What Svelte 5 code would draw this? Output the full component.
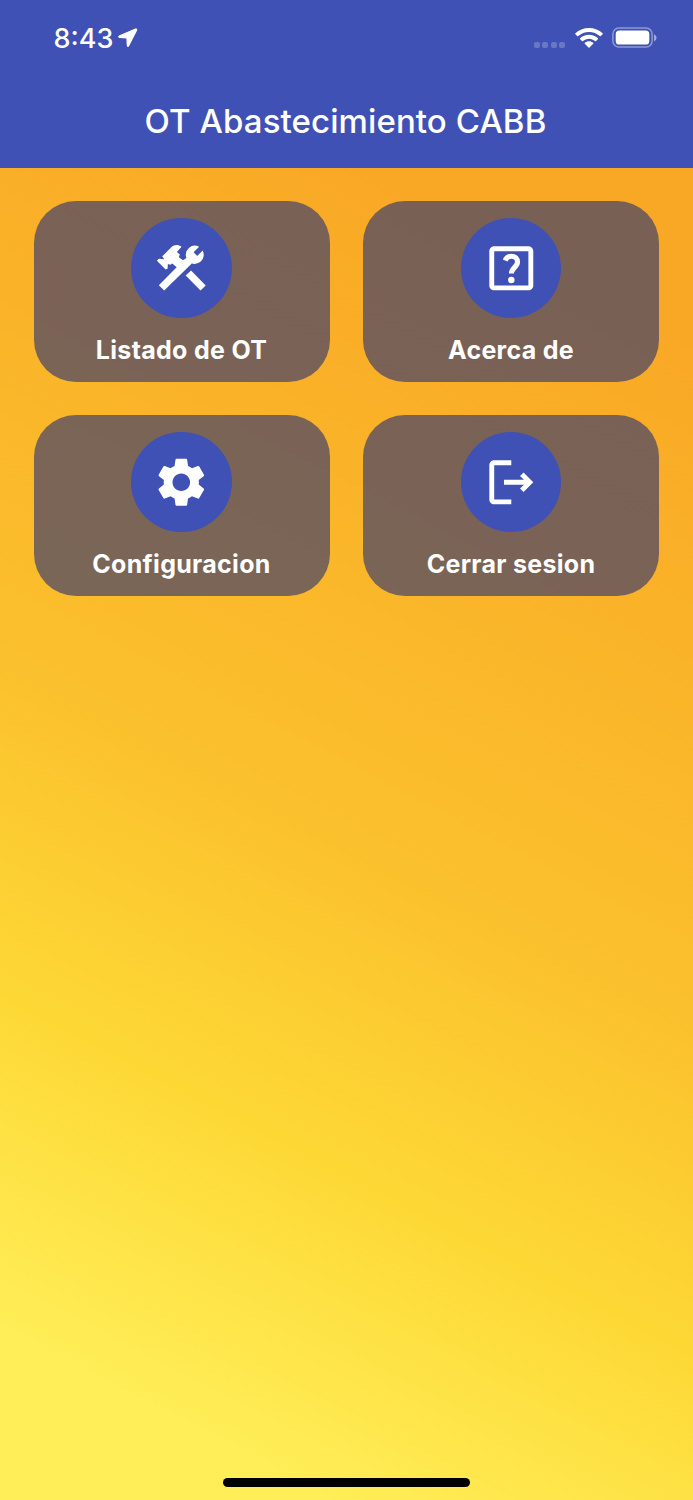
<script>
  const items = [
    { label: 'Listado de OT', icon: 'tools' },
    { label: 'Acerca de', icon: 'help' },
    { label: 'Configuracion', icon: 'settings' },
    { label: 'Cerrar sesion', icon: 'logout' }
  ];
</script>

<div class="screen">
  <header>
    <div class="status">
      <div class="clock">
        <span class="time">8:43</span>
        <svg class="location" viewBox="0 0 20 20" width="20" height="20">
          <path d="M17.6 1.2 1.2 8.2Q.2 9 1.6 9.4L9 9.8l.4 7.600q.4 1.600 1.200.2L18.500 2.200q.3-1.300-.9-1Z" fill="#fff" stroke="#fff" stroke-width="1.300" stroke-linejoin="round" />
        </svg>
      </div>
      <div class="signals">
        <div class="dots"><i></i><i></i><i></i><i></i></div>
        <svg class="wifi" viewBox="0 0 28 20" width="28" height="20">
          <path d="M14 0C8.700 0 3.900 2 .4 5.300q-.5.500 0 1l1.800 1.800q.5.500 1 0C6.100 5.400 9.900 3.900 14 3.900s7.900 1.500 10.800 4.200q.5.500 1 0l1.800-1.800q.5-.5 0-1C24.100 2 19.300 0 14 0Z" />
          <path d="M14 6.700c-3.500 0-6.600 1.300-8.900 3.500q-.5.500 0 1L7 13.100q.5.500 1 0c1.600-1.500 3.700-2.400 6-2.400s4.400.9 6 2.400q.5.500 1 0l1.900-1.900q.5-.5 0-1C20.600 8 17.500 6.700 14 6.700Z" />
          <path d="M14 13.300c-1.600 0-3.100.6-4.200 1.500q-.5.500 0 1l3.700 3.700q.5.500 1 0l3.700-3.700q.5-.5 0-1c-1.100-.9-2.600-1.500-4.200-1.500Z" />
        </svg>
        <svg class="battery" viewBox="0 0 45 21" width="45" height="21">
          <rect x=".9" y=".9" width="39.200" height="19.200" rx="6" fill="none" stroke="#fff" stroke-opacity=".42" stroke-width="1.500" />
          <rect x="3.700" y="3.500" width="33.600" height="14" rx="3.600" fill="#fff" />
          <path d="M42 7.200q2.600 1.200 2.600 3.500T42 14.200Z" fill="#fff" fill-opacity=".5" />
        </svg>
      </div>
    </div>
    <h1>OT Abastecimiento CABB</h1>
  </header>

  <main>
    <div class="grid">
      {#each items as item}
        <button class="card">
          <span class="circle">
            <svg viewBox="0 0 24 24" width="58.600" height="58.600" fill="#fff">
              {#if item.icon === 'tools'}
                <path d="m16 12.900 6 6.100-2.100 2.100-6.100-6.100z" />
                <path d="M17.500 10.200c2 0 3.700-1.650 3.700-3.700 0-.64-.18-1.240-.46-1.760l-2.200 2.200-1.490-1.490 2.250-2.250a3.700 3.700 0 0 0-5.200 4.570L12.700 8.700 11 7.500l.4-1.200-1.200-1 1.900-2.100C10.700 2.100 9 2.400 7.900 3.400L4.200 7.100 5 8.300 2.800 8.100 2 8.900l3.600 3.600.8-.4.1-1.900 1 .3.800-.5 1.800 1.600L2.800 18.900l2.200 2.200L16.300 10c.38.13.78.2 1.200.2z" />
              {:else if item.icon === 'help'}
                <path fill-rule="evenodd" d="M19 3H5c-1.100 0-2 .9-2 2v14c0 1.100.9 2 2 2h14c1.100 0 2-.9 2-2V5c0-1.100-.9-2-2-2zM5 5h14v14H5z" />
                <path d="M9.500 8.800C9.950 7.650 10.800 7.050 12 7.050c1.550 0 2.550 1.050 2.550 2.400 0 2-2.500 2.350-2.500 4.650" fill="none" stroke="#fff" stroke-width="2.100" />
                <circle cx="12" cy="16.800" r="1.350" />
              {:else if item.icon === 'settings'}
                <path d="M19.140 12.940c.04-.3.060-.61.060-.94 0-.32-.02-.64-.07-.94l2.030-1.580c.18-.14.23-.41.12-.61l-1.920-3.320c-.12-.22-.37-.29-.59-.22l-2.390.96c-.5-.38-1.030-.7-1.620-.94l-.36-2.540c-.04-.24-.24-.41-.48-.41h-3.840c-.24 0-.43.17-.47.41l-.36 2.540c-.59.24-1.130.57-1.620.94l-2.390-.96c-.22-.08-.47 0-.59.22L2.740 8.870c-.12.21-.08.47.12.61l2.030 1.580c-.05.3-.09.63-.09.94s.02.64.07.94l-2.030 1.580c-.18.14-.23.41-.12.61l1.920 3.320c.12.22.37.29.59.22l2.390-.96c.5.38 1.030.7 1.620.94l.36 2.540c.05.24.24.41.48.41h3.840c.24 0 .44-.17.47-.41l.36-2.540c.59-.24 1.130-.56 1.620-.94l2.390.96c.22.08.47 0 .59-.22l1.920-3.320c.12-.22.070-.47-.12-.61l-2.010-1.580zM12 15.600c-1.980 0-3.600-1.620-3.600-3.600s1.620-3.600 3.600-3.600 3.600 1.620 3.600 3.600-1.620 3.600-3.600 3.600z" />
              {:else}
                <path d="m17 8-1.410 1.410L17.170 11H9v2h8.170l-1.580 1.580L17 16l4-4zM5 5h7V3H5c-1.100 0-2 .9-2 2v14c0 1.100.9 2 2 2h7v-2H5z" />
              {/if}
            </svg>
          </span>
          <span class="label">{item.label}</span>
        </button>
      {/each}
    </div>
    <div class="home-bar"></div>
  </main>
</div>

<style>
  :global(body) {
    margin: 0;
  }

  .screen {
    display: flex;
    flex-direction: column;
    width: 693px;
    height: 1500px;
    overflow: hidden;
    font-family: Inter, 'Liberation Sans', sans-serif;
    color: #fff;
  }

  header {
    box-sizing: border-box;
    height: 167.500px;
    flex-shrink: 0;
    background: #3f51b5;
  }

  .status {
    display: flex;
    justify-content: space-between;
    height: 74px;
    padding: 0 36px 0 53.500px;
  }

  .clock {
    display: flex;
    align-items: center;
    gap: 5px;
  }

  .time {
    font-size: 27px;
    font-weight: 550;
    line-height: 32px;
    padding-top: 3px;
  }

  .location {
    padding-top: 2px;
  }

  .signals {
    display: flex;
    align-items: center;
    padding-top: 1px;
  }

  .dots {
    display: flex;
    gap: 2.500px;
    margin: 14px 10px 0 0;
  }

  .dots i {
    width: 6px;
    height: 6px;
    border-radius: 2px;
    background: rgba(255, 255, 255, 0.22);
  }

  .wifi {
    fill: #fff;
    margin-right: 9px;
  }

  h1 {
    margin: 0;
    padding: 27px 2px 0 0;
    font-size: 33px;
    font-weight: 500;
    line-height: 40px;
    letter-spacing: 0.100px;
    text-align: center;
    white-space: nowrap;
  }

  main {
    flex: 1;
    display: flex;
    flex-direction: column;
    justify-content: space-between;
    align-items: center;
    background: linear-gradient(207.470deg, #f9a825 10%, #fbc02d 50%, #fdd835 70%, #ffee58 90%);
  }

  .grid {
    display: grid;
    grid-template-columns: 1fr 1fr;
    gap: 33.500px;
    width: 100%;
    box-sizing: border-box;
    padding: 33.500px 34px 33.500px 33.500px;
  }

  .card {
    display: flex;
    flex-direction: column;
    align-items: center;
    height: 180.500px;
    padding: 16.500px 0 0;
    border: none;
    border-radius: 42px;
    background: rgba(67, 66, 105, 0.7);
    color: #fff;
    font-family: inherit;
  }

  .circle {
    display: flex;
    align-items: center;
    justify-content: center;
    box-sizing: border-box;
    width: 100.500px;
    height: 100.500px;
    padding-top: 2px;
    border-radius: 50%;
    background: #3f51b5;
  }

  .label {
    margin-top: 17px;
    font-size: 25px;
    font-weight: 700;
    line-height: 30px;
    letter-spacing: 0.300px;
  }

  .home-bar {
    width: 247.500px;
    height: 8.500px;
    margin-bottom: 13.500px;
    border-radius: 5px;
    background: #000;
  }
</style>
